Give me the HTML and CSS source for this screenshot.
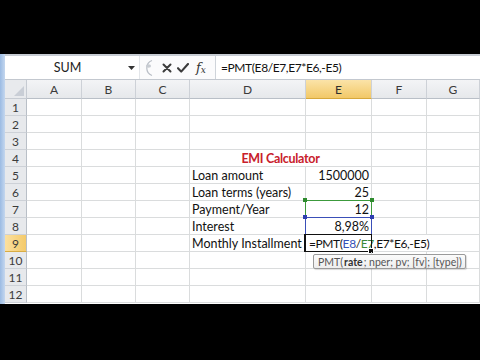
FILE: index.html
```html
<!DOCTYPE html>
<html>
<head>
<meta charset="utf-8">
<link rel="stylesheet" href="styles.css">
</head>
<body>
<div class="frame">
  <div class="letterbox top"></div>
  <div class="app">
    <div class="edge"></div>
    <div class="main">
      <div class="fbar">
        <div class="namebox">
          <span class="name">SUM</span>
          <svg class="dd" width="7" height="4" viewBox="0 0 7 4"><path d="M0 0h7L3.5 4z" fill="#333"/></svg>
        </div>
        <div class="btns">
          <svg class="split" width="12" height="18" viewBox="0 0 12 18"><path d="M11 1.5A8 8 0 0 0 11 16.5" fill="none" stroke="#b9bec6" stroke-width="1.2"/><ellipse cx="7.5" cy="7" rx="2.6" ry="1.8" fill="#c8ccd2"/></svg>
          <svg class="ic" width="10" height="10" viewBox="0 0 10 10"><path d="M1.5 1.5l7 7M8.5 1.5l-7 7" stroke="#3c3c3c" stroke-width="2" stroke-linecap="round"/></svg>
          <svg class="ic" width="12" height="10" viewBox="0 0 12 10"><path d="M1 5.2l3.2 3.4L11 1" fill="none" stroke="#3c3c3c" stroke-width="2.1" stroke-linecap="round" stroke-linejoin="round"/></svg>
          <span class="fx">f<sub>x</sub></span>
        </div>
        <div class="finput">=PMT(E8/E7,E7*E6,-E5)</div>
      </div>
      <div class="grid">
        <div class="corner"><svg width="10" height="10" viewBox="0 0 10 10"><path d="M10 0V10H0z" fill="#c9ced6"/></svg></div>
        <div class="ch">A</div><div class="ch">B</div><div class="ch">C</div><div class="ch">D</div><div class="ch sel">E</div><div class="ch">F</div><div class="ch">G</div>

        <div class="rh">1</div><div class="c"></div><div class="c"></div><div class="c"></div><div class="c"></div><div class="c"></div><div class="c"></div><div class="c"></div>
        <div class="rh">2</div><div class="c"></div><div class="c"></div><div class="c"></div><div class="c"></div><div class="c"></div><div class="c"></div><div class="c"></div>
        <div class="rh">3</div><div class="c"></div><div class="c"></div><div class="c"></div><div class="c"></div><div class="c"></div><div class="c"></div><div class="c"></div>
        <div class="rh">4</div><div class="c"></div><div class="c"></div><div class="c"></div><div class="c span2 title">EMI Calculator</div><div class="c"></div><div class="c"></div>
        <div class="rh">5</div><div class="c"></div><div class="c"></div><div class="c"></div><div class="c">Loan amount</div><div class="c num">1500000</div><div class="c"></div><div class="c"></div>
        <div class="rh">6</div><div class="c"></div><div class="c"></div><div class="c"></div><div class="c">Loan terms (years)</div><div class="c num">25</div><div class="c"></div><div class="c"></div>
        <div class="rh">7</div><div class="c"></div><div class="c"></div><div class="c"></div><div class="c">Payment/Year</div><div class="c num ref">12<span class="rng green"><i class="k tl"></i><i class="k tr"></i></span></div><div class="c"></div><div class="c"></div>
        <div class="rh">8</div><div class="c"></div><div class="c"></div><div class="c"></div><div class="c">Interest</div><div class="c num ref">8,98%<span class="rng blue"><i class="k tl"></i><i class="k tr"></i></span></div><div class="c"></div><div class="c"></div>
        <div class="rh hl">9</div><div class="c"></div><div class="c"></div><div class="c"></div><div class="c">Monthly Installment</div><div class="c span2 edit"><span class="active"><i class="fill"></i></span>=PMT(<span class="rb">E8</span>/<span class="rg">E7</span>,E7*E6,-E5)</div><div class="c"></div>
        <div class="rh">10</div><div class="c"></div><div class="c"></div><div class="c"></div><div class="c"></div><div class="c tipcell"><span class="tip">PMT(<b>rate</b>; nper; pv; [fv]; [type])</span></div><div class="c"></div><div class="c"></div>
        <div class="rh">11</div><div class="c"></div><div class="c"></div><div class="c"></div><div class="c"></div><div class="c"></div><div class="c"></div><div class="c"></div>
        <div class="rh">12</div><div class="c"></div><div class="c"></div><div class="c"></div><div class="c"></div><div class="c"></div><div class="c"></div><div class="c"></div>
      </div>
    </div>
  </div>
  <div class="letterbox bottom"></div>
</div>
</body>
</html>
```

FILE: styles.css
```css
html, body {
  margin: 0;
  padding: 0;
  background: #000;
}
.frame {
  width: 480px;
  height: 360px;
  display: flex;
  flex-direction: column;
  overflow: hidden;
  font-family: Lato, "Open Sans", sans-serif;
}
.letterbox.top { height: 54px; background: #000; }
.letterbox.bottom { flex: 1; background: #000; }
.app {
  height: 250px;
  display: flex;
  background: #fff;
  overflow: hidden;
}
.edge {
  width: 5px;
  background: linear-gradient(90deg, #9bbbe3, #c4d7ef);
}
.main {
  flex: 1;
  display: flex;
  flex-direction: column;
  min-width: 0;
}
.fbar {
  height: 23px;
  border-top: 2px solid #c7ccd3;
  border-bottom: 1px solid #c3c8cf;
  display: flex;
  background: #fff;
}
.namebox {
  width: 134px;
  display: flex;
  align-items: center;
  border-right: 1px solid #e3e6ea;
}
.name {
  flex: 1;
  text-align: center;
  font-size: 12.5px;
  color: #222;
  padding-left: 2px;
}
.dd { margin-right: 4px; }
.btns {
  width: 74px;
  display: flex;
  align-items: center;
  background: #fbfbfc;
  border-right: 1px solid #cfd4da;
  padding-left: 1px;
}
.split { margin-right: 9px; }
.ic { margin-right: 5px; }
.btns .ic + .ic { margin-right: 7px; }
.fx {
  font-family: "DejaVu Serif", "Liberation Serif", serif;
  font-style: italic;
  font-size: 13px;
  color: #333;
  line-height: 1;
}
.fx sub { font-size: 9px; vertical-align: -1px; }
.finput {
  flex: 1;
  display: flex;
  align-items: center;
  padding-left: 5px;
  font-size: 12px;
  letter-spacing: -0.4px;
  color: #111;
}
.grid {
  display: grid;
  grid-template-columns: 22px 55px 54px 54px 116px 66px 55px 1fr;
  grid-template-rows: 19px repeat(12, 17px);
  font-size: 12.5px;
  color: #111;
}
.corner {
  background: #e8eaed;
  border-right: 1px solid #c6cbd2;
  border-bottom: 1px solid #c6cbd2;
  display: flex;
  align-items: flex-end;
  justify-content: flex-end;
  padding: 0 2px 2px 0;
}
.ch {
  background: linear-gradient(#f3f4f6, #e6e8eb);
  border-right: 1px solid #cdd1d7;
  border-bottom: 1px solid #b9bfc7;
  display: flex;
  align-items: center;
  justify-content: center;
  font-size: 12px;
  color: #3b3b3b;
}
.ch.sel {
  background: linear-gradient(#fbe3a8, #f2c868);
  border-bottom-color: #d6a83c;
  color: #2e2e2e;
}
.rh {
  background: #e7e9ec;
  border-right: 1px solid #b9bfc7;
  border-bottom: 1px solid #cdd1d7;
  display: flex;
  align-items: center;
  justify-content: center;
  font-size: 12px;
  color: #3b3b3b;
}
.rh.hl {
  background: linear-gradient(90deg, #fbe0a0, #f4ca6a);
  border-bottom-color: #d8ac44;
}
.c {
  border-right: 1px solid #dadcdd;
  border-bottom: 1px solid #dadcdd;
  display: flex;
  align-items: center;
  padding: 0 2px;
  white-space: nowrap;
  position: relative;
  min-width: 0;
}
.span2 { grid-column: span 2; }
.title {
  justify-content: center;
  color: #c8202b;
  font-weight: bold;
  letter-spacing: -0.3px;
}
.num { justify-content: flex-end; }
.rng {
  position: absolute;
  left: -1px;
  top: -1px;
  width: 65px;
  height: 16px;
  border: 1px solid;
}
.rng.green { border-color: #3c9a3c; }
.rng.blue { border-color: #3a4fb8; border-bottom-color: #b7a83a; }
.k {
  position: absolute;
  width: 4px;
  height: 4px;
  top: -3px;
}
.green .k { background: #2e8b2e; }
.blue .k { background: #2f3fb0; }
.k.tl { left: -3px; }
.k.tr { right: -3px; }
.edit {
  padding-left: 3px;
  border-right: none;
  font-size: 12px;
  letter-spacing: -0.4px;
}
.active {
  position: absolute;
  left: -2px;
  top: -1px;
  width: 65px;
  height: 16px;
  border: 1.5px solid #111;
  border-left-width: 2px;
  pointer-events: none;
}
.fill {
  position: absolute;
  right: -3px;
  bottom: -3px;
  width: 4px;
  height: 4px;
  background: #111;
  border: 1px solid #fff;
}
.rb { color: #3652b8; }
.rg { color: #3b8a3b; }
.tipcell { overflow: visible; z-index: 3; }
.tip {
  position: absolute;
  left: 7px;
  top: 2px;
  height: 13px;
  padding: 0 3px 0 4px;
  display: flex;
  align-items: center;
  background: linear-gradient(#fbfbfb, #eeeeee);
  border: 1px solid #9a9a9a;
  border-radius: 2px;
  box-shadow: 1px 1px 1px rgba(0,0,0,0.15);
  font-size: 10.5px;
  color: #555;
  white-space: pre;
}
.tip b { color: #333; margin: 0 1px; }
```
